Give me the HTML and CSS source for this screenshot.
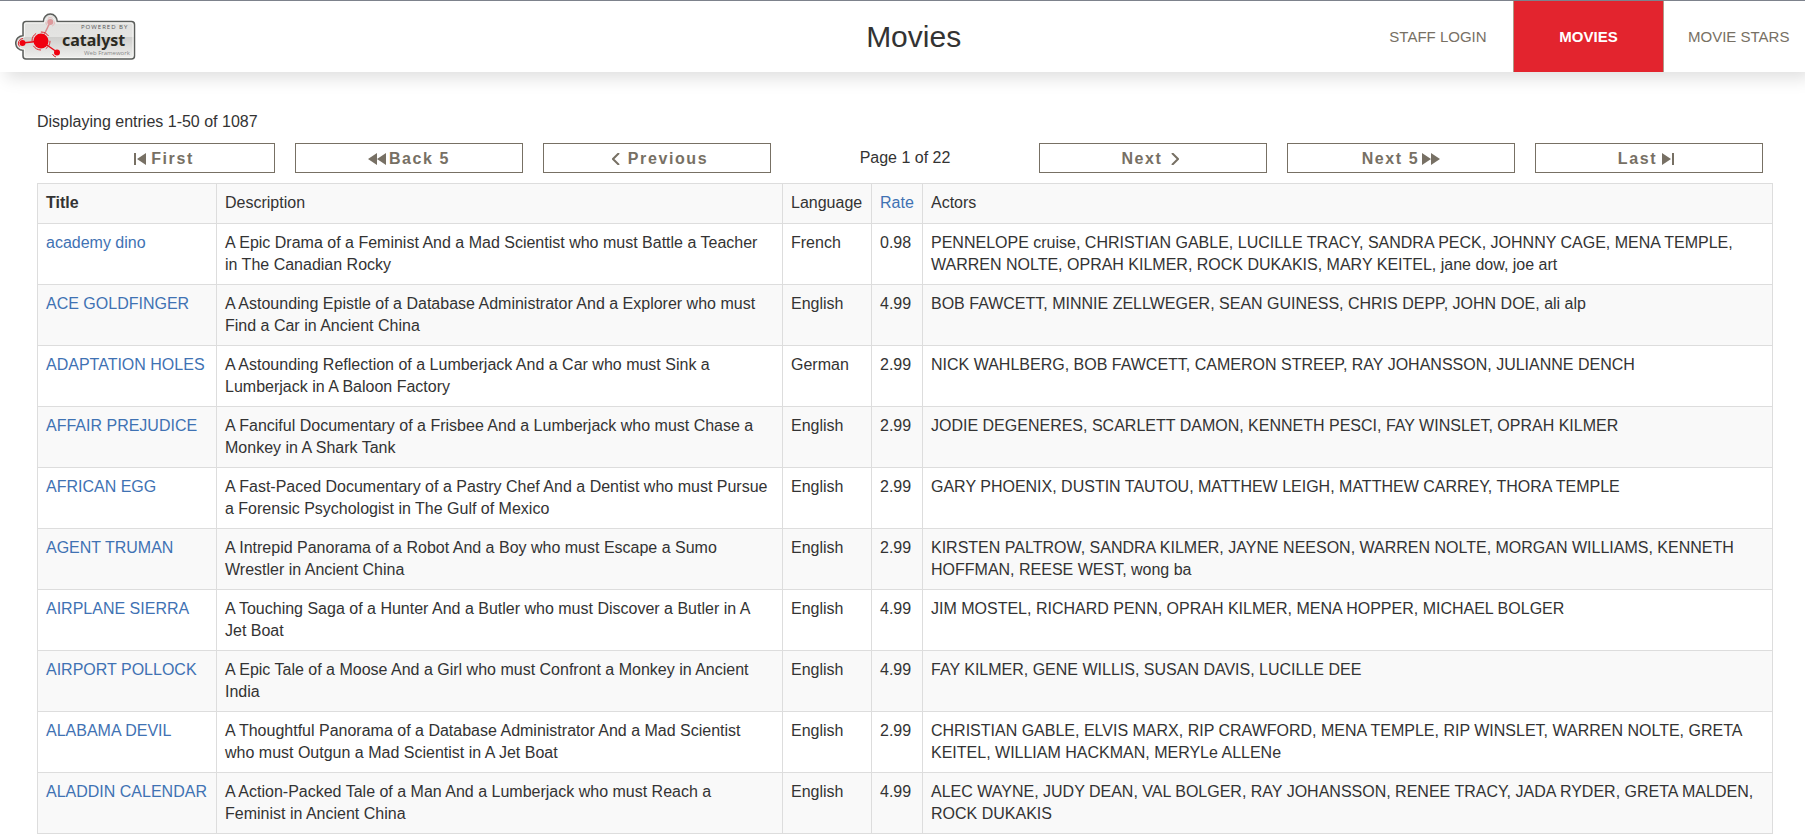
FILE: index.html
```html
<!DOCTYPE html>
<html lang="en">
<head>
<meta charset="utf-8">
<title>Movies</title>
<link rel="stylesheet" href="styles.css">
</head>
<body>
<header class="topbar">
  <a class="brand" href="#" aria-label="Powered by Catalyst Web Framework">
    <svg class="logo" viewBox="0 0 122 48" width="122" height="48">
      <defs>
        <linearGradient id="plate" x1="0" y1="0" x2="0" y2="1">
          <stop offset="0" stop-color="#dededc"/>
          <stop offset=".5" stop-color="#e4e4e2"/>
          <stop offset=".52" stop-color="#cfcfcd"/>
          <stop offset="1" stop-color="#f0f0ee"/>
        </linearGradient>
      </defs>
      <path d="M11 8.500H28.300A7 7.500 0 0 1 42.300 8.500H116.500Q119.500 8.500 119.500 11.500V43Q119.500 46 116.500 46H11Q8 46 8 43V37.300A7.300 7.300 0 0 1 8 22.700V11.500Q8 8.500 11 8.500Z" fill="url(#plate)" stroke="#5b5e5b" stroke-width="1.500"/>
      <path d="M11 10H29.800A5.500 6 0 0 1 40.800 10H116Q118 10 118 12V42.500Q118 44.500 116 44.500H12Q9.500 44.500 9.500 42.500V36A5.900 5.900 0 0 1 8 24.200L9.500 24V12Q9.500 10 11 10Z" fill="none" stroke="#f6f6f4"/>
      <path d="M26 28L35.300 9" stroke="#d98a8c" stroke-width="1.500"/>
      <path d="M26 28L7 30M26 28L42 39" stroke="#e60c18" stroke-width="1.500"/>
      <circle cx="35.300" cy="9" r="3" fill="#dd9a9c"/>
      <circle cx="35.300" cy="9" r="4.500" fill="none" stroke="#e8bcbc" stroke-dasharray="5 4"/>
      <circle cx="26" cy="28" r="7.500" fill="#f0000f"/>
      <circle cx="26" cy="28" r="9" fill="none" stroke="#e2242c" stroke-dasharray="9 5"/>
      <circle cx="7.500" cy="30" r="3" fill="#f0000f"/>
      <path d="M8 25.500A4.800 4.800 0 0 0 4.500 33.500" fill="none" stroke="#e2242c"/>
      <circle cx="42" cy="39.500" r="3" fill="#f0000f"/>
      <path d="M37.500 41A5 5 0 0 0 41 44" fill="none" stroke="#e2242c"/>
      <text class="logo-top" x="66" y="16">POWERED BY</text>
      <text class="logo-name" x="47" y="33">catalyst</text>
      <text class="logo-sub" x="69" y="42">Web Framework</text>
    </svg>
  </a>
  <h1 class="page-title">Movies</h1>
  <nav class="menu">
    <a class="menu-item" href="#">STAFF LOGIN</a>
    <a class="menu-item active" href="#">MOVIES</a>
    <a class="menu-item last" href="#">MOVIE STARS</a>
  </nav>
</header>
<main class="content">
  <p class="summary">Displaying entries 1-50 of 1087</p>
  <div class="pager">
    <button class="page-btn back" type="button"><svg class="icon" viewBox="0 0 12 12" width="12" height="12"><path d="M0 0H2V12H0ZM12 0V12L3 6Z"/></svg><span>First</span></button>
    <button class="page-btn jump" type="button"><svg class="icon" viewBox="0 0 18 12" width="18" height="12"><path d="M9 0V12L0 6ZM18 0V12L9 6Z"/></svg><span>Back 5</span></button>
    <button class="page-btn back step" type="button"><svg class="icon line" viewBox="0 0 8 12" width="8" height="12"><path d="M7 0L1 6L7 12"/></svg><span>Previous</span></button>
    <span class="page-now">Page 1 of 22</span>
    <button class="page-btn forward step" type="button"><span>Next</span><svg class="icon line" viewBox="0 0 8 12" width="8" height="12"><path d="M1 0L7 6L1 12"/></svg></button>
    <button class="page-btn jump" type="button"><span>Next 5</span><svg class="icon" viewBox="0 0 18 12" width="18" height="12"><path d="M0 0L9 6L0 12ZM9 0L18 6L9 12Z"/></svg></button>
    <button class="page-btn forward" type="button"><span>Last</span><svg class="icon" viewBox="0 0 12 12" width="12" height="12"><path d="M0 0L9 6L0 12ZM10 0H12V12H10Z"/></svg></button>
  </div>
  <table class="movies">
    <colgroup><col class="c-title"><col class="c-desc"><col class="c-lang"><col class="c-rate"><col></colgroup>
    <thead>
      <tr><th class="sorted" scope="col">Title</th><th scope="col">Description</th><th scope="col">Language</th><th scope="col"><a href="#">Rate</a></th><th scope="col">Actors</th></tr>
    </thead>
    <tbody>
      <tr><td><a href="#">academy dino</a></td><td>A Epic Drama of a Feminist And a Mad Scientist who must Battle a Teacher in The Canadian Rocky</td><td>French</td><td>0.98</td><td>PENNELOPE cruise, CHRISTIAN GABLE, LUCILLE TRACY, SANDRA PECK, JOHNNY CAGE, MENA TEMPLE, WARREN NOLTE, OPRAH KILMER, ROCK DUKAKIS, MARY KEITEL, jane dow, joe art</td></tr>
      <tr><td><a href="#">ACE GOLDFINGER</a></td><td>A Astounding Epistle of a Database Administrator And a Explorer who must Find a Car in Ancient China</td><td>English</td><td>4.99</td><td>BOB FAWCETT, MINNIE ZELLWEGER, SEAN GUINESS, CHRIS DEPP, JOHN DOE, ali alp</td></tr>
      <tr><td><a href="#">ADAPTATION HOLES</a></td><td>A Astounding Reflection of a Lumberjack And a Car who must Sink a Lumberjack in A Baloon Factory</td><td>German</td><td>2.99</td><td>NICK WAHLBERG, BOB FAWCETT, CAMERON STREEP, RAY JOHANSSON, JULIANNE DENCH</td></tr>
      <tr><td><a href="#">AFFAIR PREJUDICE</a></td><td>A Fanciful Documentary of a Frisbee And a Lumberjack who must Chase a Monkey in A Shark Tank</td><td>English</td><td>2.99</td><td>JODIE DEGENERES, SCARLETT DAMON, KENNETH PESCI, FAY WINSLET, OPRAH KILMER</td></tr>
      <tr><td><a href="#">AFRICAN EGG</a></td><td>A Fast-Paced Documentary of a Pastry Chef And a Dentist who must Pursue a Forensic Psychologist in The Gulf of Mexico</td><td>English</td><td>2.99</td><td>GARY PHOENIX, DUSTIN TAUTOU, MATTHEW LEIGH, MATTHEW CARREY, THORA TEMPLE</td></tr>
      <tr><td><a href="#">AGENT TRUMAN</a></td><td>A Intrepid Panorama of a Robot And a Boy who must Escape a Sumo Wrestler in Ancient China</td><td>English</td><td>2.99</td><td>KIRSTEN PALTROW, SANDRA KILMER, JAYNE NEESON, WARREN NOLTE, MORGAN WILLIAMS, KENNETH HOFFMAN, REESE WEST, wong ba</td></tr>
      <tr><td><a href="#">AIRPLANE SIERRA</a></td><td>A Touching Saga of a Hunter And a Butler who must Discover a Butler in A Jet Boat</td><td>English</td><td>4.99</td><td>JIM MOSTEL, RICHARD PENN, OPRAH KILMER, MENA HOPPER, MICHAEL BOLGER</td></tr>
      <tr><td><a href="#">AIRPORT POLLOCK</a></td><td>A Epic Tale of a Moose And a Girl who must Confront a Monkey in Ancient India</td><td>English</td><td>4.99</td><td>FAY KILMER, GENE WILLIS, SUSAN DAVIS, LUCILLE DEE</td></tr>
      <tr><td><a href="#">ALABAMA DEVIL</a></td><td>A Thoughtful Panorama of a Database Administrator And a Mad Scientist who must Outgun a Mad Scientist in A Jet Boat</td><td>English</td><td>2.99</td><td>CHRISTIAN GABLE, ELVIS MARX, RIP CRAWFORD, MENA TEMPLE, RIP WINSLET, WARREN NOLTE, GRETA KEITEL, WILLIAM HACKMAN, MERYLe ALLENe</td></tr>
      <tr><td><a href="#">ALADDIN CALENDAR</a></td><td>A Action-Packed Tale of a Man And a Lumberjack who must Reach a Feminist in Ancient China</td><td>English</td><td>4.99</td><td>ALEC WAYNE, JUDY DEAN, VAL BOLGER, RAY JOHANSSON, RENEE TRACY, JADA RYDER, GRETA MALDEN, ROCK DUKAKIS</td></tr>
    </tbody>
  </table>
</main>
</body>
</html>
```
FILE: styles.css
```css
* {
  box-sizing: border-box;
}

body {
  margin: 0;
  background: #fff;
  color: #333;
  font-family: "Liberation Sans", Arial, sans-serif;
  font-size: 16px;
  line-height: 22px;
}

a {
  color: #3f72b3;
  text-decoration: none;
}

.topbar {
  display: grid;
  grid-template-columns: 31fr 60fr 442px;
  border-top: 1px solid #7d828c;
  background: #fff;
  box-shadow: 6px 6px 16px rgba(0, 0, 0, 0.13);
}

.brand {
  display: flex;
  align-items: center;
  padding-left: 15px;
}

.logo-top {
  font: 6px "Open Sans", sans-serif;
  letter-spacing: 1px;
  fill: #555;
}

.logo-name {
  font: bold 16px "Noto Sans", sans-serif;
  fill: #2b2a22;
}

.logo-sub {
  font: 6px "Open Sans", sans-serif;
  fill: #888;
}

.page-title {
  margin: 0;
  font-size: 30px;
  font-weight: normal;
  line-height: 71px;
  text-align: center;
}

.menu {
  display: flex;
}

.menu-item {
  width: 150px;
  color: #777064;
  font-size: 15px;
  line-height: 71px;
  text-align: center;
}

.menu-item.active {
  width: 151px;
  border: solid #b09a88;
  border-width: 0 1px;
  background: #e3242e;
  color: #fff;
  font-weight: bold;
}

.menu-item.last {
  flex: 1;
  padding-left: 24px;
  text-align: left;
}

.content {
  padding: 39px 32px 0 37px;
}

.summary {
  margin: 0;
}

.pager {
  display: grid;
  grid-template-columns: repeat(7, 1fr);
  gap: 20px;
  padding: 10px;
}

.page-btn {
  display: flex;
  align-items: center;
  justify-content: center;
  gap: 5px;
  height: 30px;
  padding: 1px 0 0;
  border: 1px solid #777064;
  background: #fff;
  color: #777064;
  font-family: inherit;
  font-size: 16px;
  font-weight: bold;
  letter-spacing: 0.1em;
}

.page-btn.back {
  padding-left: 6px;
}

.page-btn.forward {
  padding-right: 6px;
}

.page-btn.jump {
  gap: 3px;
}

.page-btn.step {
  gap: 8px;
}

.icon {
  fill: #777064;
}

.icon.line {
  fill: none;
  stroke: #777064;
  stroke-width: 2;
}

.page-now {
  line-height: 30px;
  text-align: center;
}

.movies {
  width: 100%;
  border-collapse: collapse;
  table-layout: fixed;
}

.c-title {
  width: 179px;
}

.c-desc {
  width: 566px;
}

.c-lang {
  width: 89px;
}

.c-rate {
  width: 51px;
}

.movies th,
.movies td {
  padding: 8px;
  border: 1px solid #ddd;
  text-align: left;
  vertical-align: top;
}

.movies td:nth-child(2) {
  padding-right: 12px;
}

.movies th {
  padding-bottom: 9px;
  background: #f9f9f9;
  font-weight: normal;
}

.movies .sorted {
  font-weight: bold;
}

.movies tbody tr:nth-child(even) {
  background: #f9f9f9;
}
```
